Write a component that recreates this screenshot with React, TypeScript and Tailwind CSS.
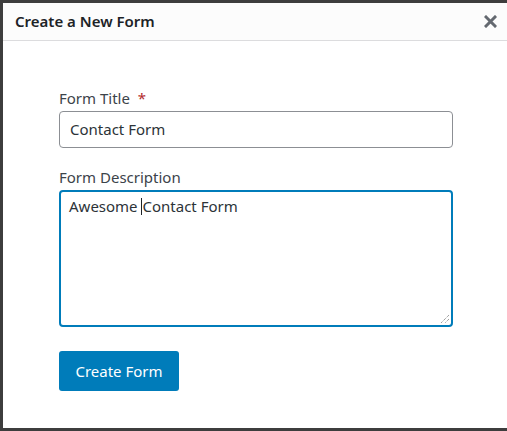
export default function App() {
  return (
    <div className="h-[431px] w-[507px] overflow-hidden bg-[#3d3d3d] pt-[3px] pl-[3px] pb-[3px] font-['Noto_Sans',sans-serif]">
      <div className="flex h-[425px] flex-col bg-white">
        <div className="flex h-[38px] items-center justify-between border-b border-[#dcdcde] bg-[#fcfcfc] pl-3 pr-2.5">
          <h1 className="text-[15px] font-semibold text-[#1d2327]">Create a New Form</h1>
          <svg width="13" height="13" viewBox="0 0 13 13" className="text-[#646970]">
            <path d="M2 2 L11 11 M11 2 L2 11" stroke="currentColor" strokeWidth="3" strokeLinecap="square" />
          </svg>
        </div>
        <div className="flex flex-col px-14 pt-[47px]">
          <label className="text-[15px] leading-[21px] text-[#3c434a]">
            Form Title <span className="ml-1 text-[#b32d2e]">*</span>
          </label>
          <div className="mt-[2px] flex h-[37px] w-[394px] items-center rounded-[4px] border border-[#8c8f94] px-2.5 text-[15px] text-[#2c3338]">
            Contact Form
          </div>
          <label className="mt-[19px] text-[15px] leading-[21px] text-[#3c434a]">Form Description</label>
          <div className="relative mt-[2px] h-[137px] w-[394px] rounded-[4px] border-2 border-[#007cba] px-2 pt-[3px] text-[15px] text-[#2c3338]">
            <span>Awesome </span>
            <span className="inline-block h-[17px] w-px translate-y-[3px] bg-[#1d2327]" />
            <span>Contact Form</span>
            <svg width="10" height="10" viewBox="0 0 10 10" className="absolute right-[1px] bottom-[1px]">
              <path d="M9 1 L1 9 M9 5 L5 9" stroke="#777" strokeWidth="1" strokeDasharray="1 1" />
            </svg>
          </div>
          <button className="mt-[24px] flex h-10 w-[120px] items-center justify-center rounded-[3px] bg-[#007cba] text-[15px] text-white">
            Create Form
          </button>
        </div>
      </div>
    </div>
  );
}
